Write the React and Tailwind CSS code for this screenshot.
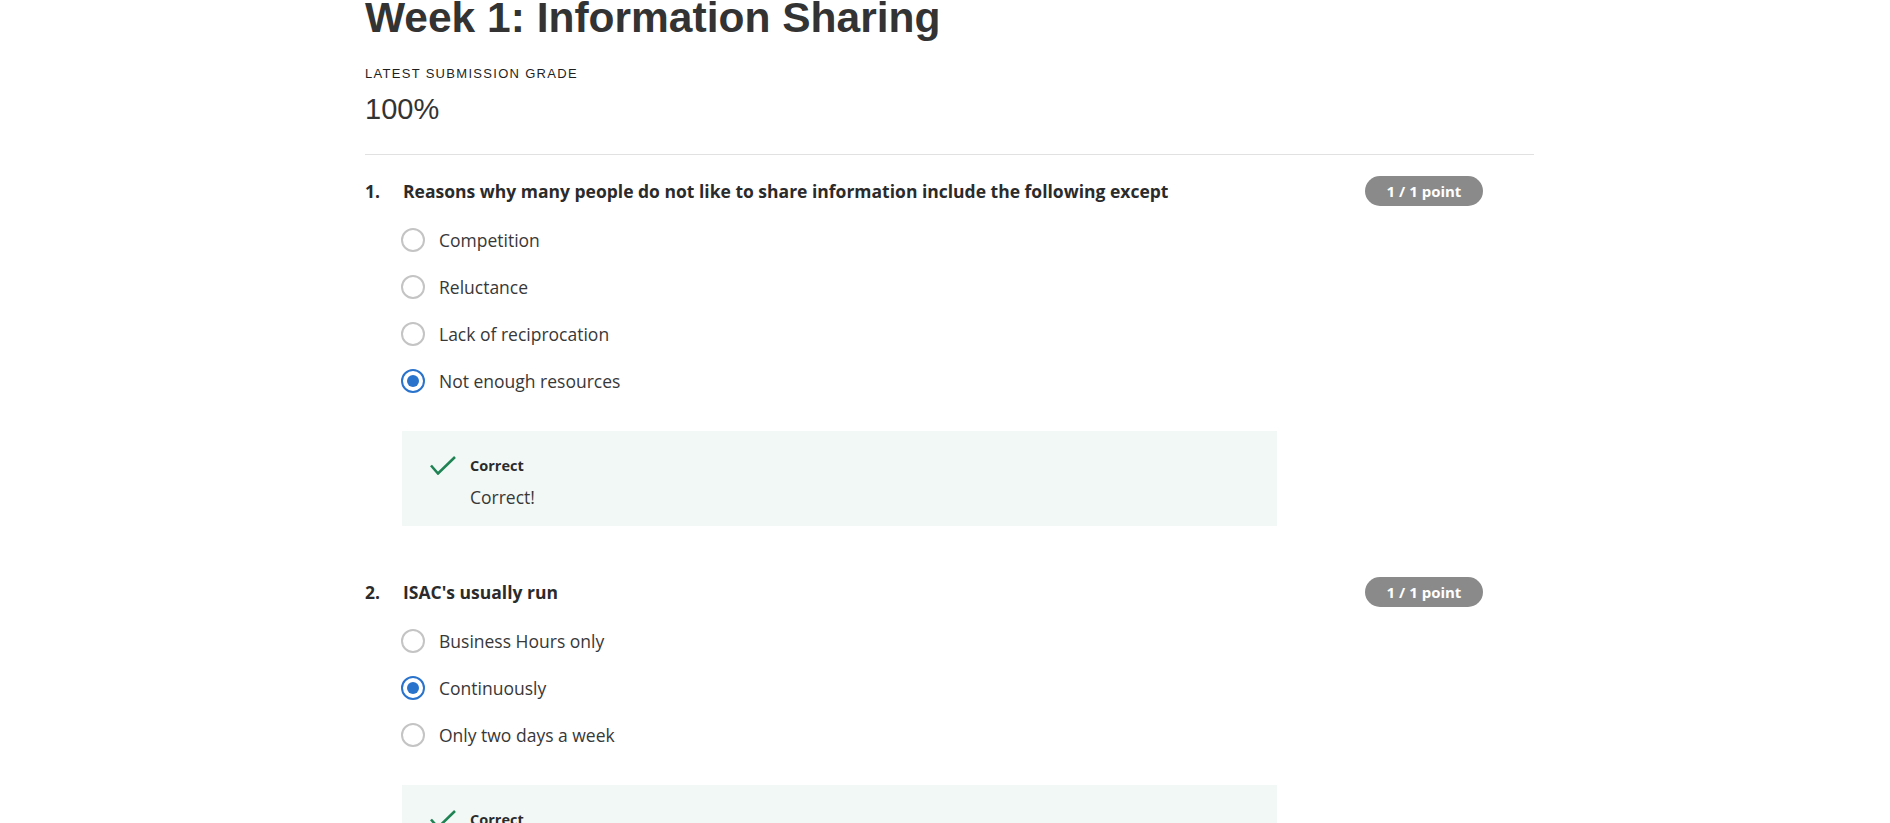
import React from "react";

const OS = { fontFamily: '"Open Sans", "Noto Sans", sans-serif' };
const AR = { fontFamily: '"Liberation Sans", Arial, sans-serif' };

function Radio({ checked }) {
  if (checked) {
    return (
      <span className="flex h-[24px] w-[24px] shrink-0 items-center justify-center rounded-full border-2 border-[#2a73cc] bg-white">
        <span className="h-[12px] w-[12px] rounded-full bg-[#2a73cc]" />
      </span>
    );
  }
  return <span className="h-[24px] w-[24px] shrink-0 rounded-full border-2 border-[#c4c4c4] bg-white" />;
}

function Check() {
  return (
    <svg width="26" height="19" viewBox="0 0 26 19" className="shrink-0">
      <path d="M1 9.5 L8 17.5 L25 1" fill="none" stroke="#1f8354" strokeWidth="2.6" strokeLinecap="butt" strokeLinejoin="miter" />
    </svg>
  );
}

function Question({ num, text, options, selected }) {
  return (
    <div className="mb-[51px]" style={OS}>
      <div className="flex h-[30px] items-center">
        <div className="w-[38px] shrink-0 text-[17.5px] font-bold leading-[24px] text-[#2b2b2b]">{num}.</div>
        <div className="flex-1 text-[17.5px] font-bold leading-[24px] text-[#2b2b2b]">{text}</div>
        <div className="mr-[51px] flex h-[30px] w-[118px] shrink-0 items-center justify-center rounded-full bg-[#8a8a8a] text-[15px] font-bold leading-[20px] text-white">
          1 / 1 point
        </div>
      </div>
      <div className="mt-[10px] pl-[36px]">
        {options.map((o, i) => (
          <div key={o} className="flex h-[47px] items-center gap-[14px]">
            <Radio checked={i === selected} />
            <span className="text-[17.5px] leading-[24px] text-[#383838]">{o}</span>
          </div>
        ))}
      </div>
      <div className="ml-[37px] mt-[27px] flex h-[95px] w-[875px] bg-[#f2f8f6] pl-[28px] pt-[25px]">
        <div className="w-[40px] shrink-0">
          <Check />
        </div>
        <div>
          <div className="text-[14.5px] font-bold leading-[20px] text-[#2b2b2b]">Correct</div>
          <div className="mt-[9px] text-[17.5px] leading-[24px] text-[#383838]">Correct!</div>
        </div>
      </div>
    </div>
  );
}

export default function App() {
  return (
    <div className="h-[823px] w-full overflow-hidden bg-white">
      <div className="ml-[365px] w-[1169px]">
        <h1 className="-mt-[3px] text-[42.5px] font-bold leading-[42px] text-[#333333]" style={AR}>
          Week 1: Information Sharing
        </h1>
        <div className="mt-[27px] text-[13px] leading-[16px] tracking-[1.3px] text-[#1f1f1f]" style={AR}>
          LATEST SUBMISSION GRADE
        </div>
        <div className="mt-[10px] text-[29px] leading-[34px] text-[#333333]" style={AR}>
          100%
        </div>
        <div className="mt-[28px] h-px w-full bg-[#e1e1e1]" />
        <div className="mt-[21px]">
          <Question
            num={1}
            text="Reasons why many people do not like to share information include the following except"
            options={["Competition", "Reluctance", "Lack of reciprocation", "Not enough resources"]}
            selected={3}
          />
          <Question
            num={2}
            text="ISAC's usually run"
            options={["Business Hours only", "Continuously", "Only two days a week"]}
            selected={1}
          />
        </div>
      </div>
    </div>
  );
}
